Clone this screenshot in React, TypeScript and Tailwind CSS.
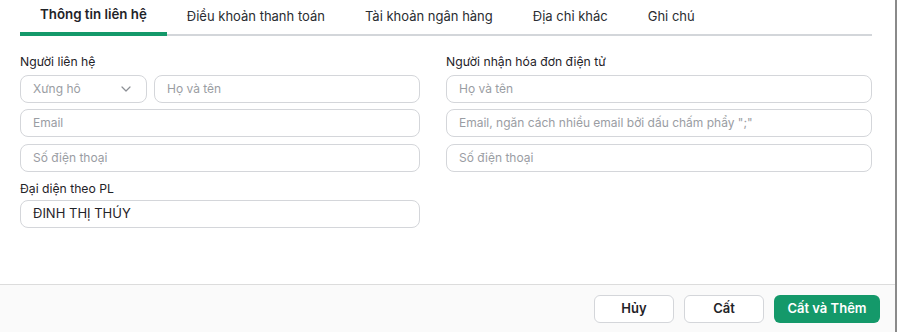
import { ChevronDown } from 'lucide-react';

const tabs = ['Thông tin liên hệ', 'Điều khoản thanh toán', 'Tài khoản ngân hàng', 'Địa chỉ khác', 'Ghi chú'];

function Field({ placeholder, value, className = '' }: { placeholder?: string; value?: string; className?: string }) {
  return (
    <div
      className={`h-[28px] flex items-center px-3 rounded-lg border border-[#d4d6da] bg-white ${
        value ? 'text-[13px] text-[#1f2328]' : 'text-[12px] text-[#9a9da3]'
      } ${className}`}
    >
      {value ?? placeholder}
    </div>
  );
}

export default function App() {
  return (
    <div
      className="w-[897px] h-[332px] flex flex-col bg-white border-r-2 border-[#8a8a8a] overflow-hidden"
      style={{ fontFamily: 'Inter, "Noto Sans", sans-serif' }}
    >
      <div className="flex-1 flex flex-col">
        <div className="ml-5 mr-[23px] flex border-b-2 border-[#d3d6da] h-[36px]">
          {tabs.map((t, i) => (
            <div
              key={t}
              className={`px-5 flex items-center pb-[2px] -mb-[2px] ${
                i === 0
                  ? 'text-[13.3px] font-semibold text-[#1f2328] border-b-[4px] border-[#14996a]'
                  : 'text-[13px] text-[#2a2d31]'
              }`}
            >
              {t}
            </div>
          ))}
        </div>

        <div className="flex gap-[26px] px-5 pt-[17px]">
          <div className="w-[400px] flex flex-col">
            <div className="text-[12.2px] text-[#1f2328] leading-[18px] mb-[4px]">Người liên hệ</div>
            <div className="flex gap-[7px]">
              <div className="w-[127px] h-[28px] flex items-center justify-between px-3 rounded-lg border border-[#d4d6da] text-[12px] text-[#9a9da3]">
                Xưng hô
                <ChevronDown className="w-4 h-4 text-[#8c8f95]" strokeWidth={1.8} />
              </div>
              <Field placeholder="Họ và tên" className="flex-1" />
            </div>
            <Field placeholder="Email" className="mt-[6px]" />
            <Field placeholder="Số điện thoại" className="mt-[7px]" />
            <div className="text-[12.2px] text-[#1f2328] leading-[18px] mt-[8px] mb-[2px]">Đại diện theo PL</div>
            <Field value="ĐINH THỊ THÚY" />
          </div>

          <div className="flex-1 mr-[3px] flex flex-col">
            <div className="text-[12.2px] text-[#1f2328] leading-[18px] mb-[4px]">Người nhận hóa đơn điện tử</div>
            <Field placeholder="Họ và tên" />
            <Field placeholder={'Email, ngăn cách nhiều email bởi dấu chấm phẩy ";"'} className="mt-[6px]" />
            <Field placeholder="Số điện thoại" className="mt-[7px]" />
          </div>
        </div>
      </div>

      <div className="h-[48px] border-t border-[#dcdcdc] bg-[#fafafa] flex items-center justify-end gap-[10px] pr-[15px]">
        <button className="w-[80px] h-[28px] rounded-md border border-[#d4d6da] bg-white text-[13px] font-semibold text-[#1f2328]">
          Hủy
        </button>
        <button className="w-[80px] h-[28px] rounded-md border border-[#d4d6da] bg-white text-[13px] font-semibold text-[#1f2328]">
          Cất
        </button>
        <button className="w-[106px] h-[28px] rounded-md bg-[#14996a] text-[13px] font-semibold text-white">
          Cất và Thêm
        </button>
      </div>
    </div>
  );
}
